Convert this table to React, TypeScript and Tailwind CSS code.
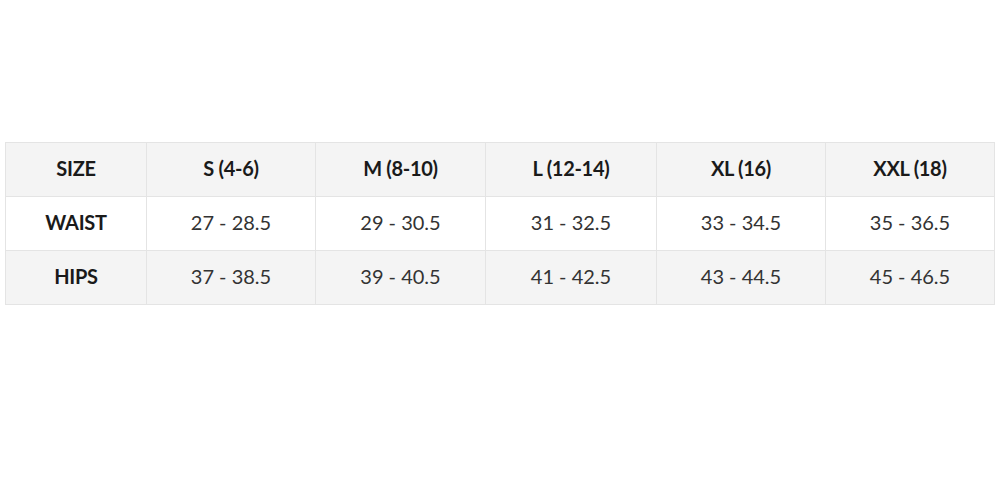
const headers = ["SIZE", "S (4-6)", "M (8-10)", "L (12-14)", "XL (16)", "XXL (18)"];

const rows = [
  { label: "WAIST", values: ["27 - 28.5", "29 - 30.5", "31 - 32.5", "33 - 34.5", "35 - 36.5"], bg: "bg-white" },
  { label: "HIPS", values: ["37 - 38.5", "39 - 40.5", "41 - 42.5", "43 - 44.5", "45 - 46.5"], bg: "bg-[#f4f4f4]" },
];

export default function App() {
  return (
    <div
      className="h-[500px] w-[1000px] bg-white pt-[142px] pl-[5px]"
      style={{ fontFamily: "Lato, 'Open Sans', sans-serif" }}
    >
      <table className="w-[989px] table-fixed border-collapse text-[20px] text-[#1a1a1a]">
        <colgroup>
          <col className="w-[141px]" />
          <col className="w-[169px]" />
          <col className="w-[170px]" />
          <col className="w-[171px]" />
          <col className="w-[169px]" />
          <col className="w-[169px]" />
        </colgroup>
        <thead>
          {/* header row */}
          <tr className="h-[54px] bg-[#f4f4f4]">
            {headers.map((h) => (
              <th key={h} className="border border-[#e4e4e4] pb-[3px] text-center font-bold tracking-[-0.3px]">
                {h}
              </th>
            ))}
          </tr>
        </thead>
        <tbody>
          {rows.map((row) => (
            <tr key={row.label} className={`h-[54px] ${row.bg}`}>
              <td className="border border-[#e4e4e4] pb-[3px] text-center font-bold tracking-[-0.3px]">{row.label}</td>
              {row.values.map((v) => (
                <td key={v} className="border border-[#e4e4e4] pb-[3px] text-center text-[#333]">
                  {v}
                </td>
              ))}
            </tr>
          ))}
        </tbody>
      </table>
    </div>
  );
}
